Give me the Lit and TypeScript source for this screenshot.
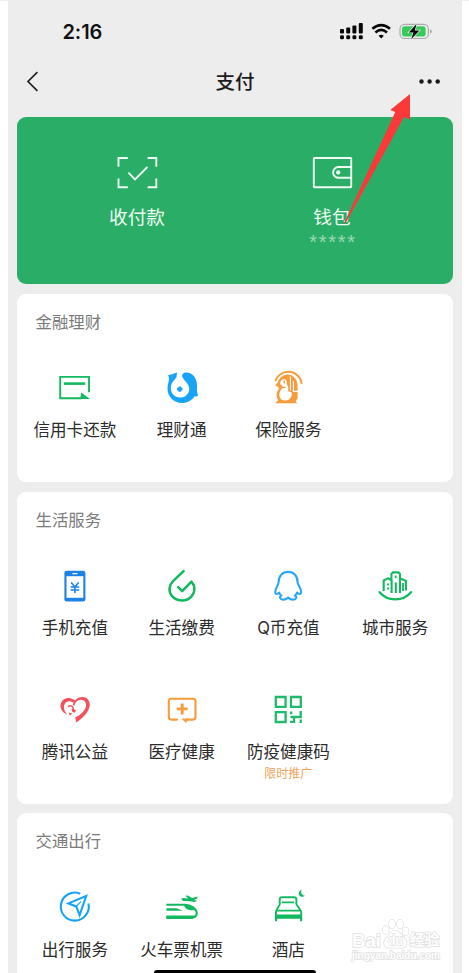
import { LitElement, html, svg, css } from "lit";
import { customElement, property } from "lit/decorators.js";

const G = "#12b95f";
const B = "#17a4f7";
const O = "#f79b3c";

const icons: Record<string, unknown> = {
  card: svg`<path d="M34 24.2V8.9H5.2V30.2H26" fill="none" stroke=${G} stroke-width="1.9"/>
    <path d="M8.8 15.6H30.2" stroke=${G} stroke-width="2.6"/>
    <path d="M26.2 24.6L35 31.1H25.2Z" fill=${G}/>`,
  fund: svg`<path d="M6.2 6.9L9.4 6.4 14.9 4.6 14.6 8.8C13 12 9.2 14.2 8.8 19.6 8.8 25.8 12.8 29.6 18 29.6 23.4 29.6 27.2 25.6 27.2 20.4 27 15.4 22 12.8 20.4 9 19.4 6 21.6 4.4 25 4.5 31 5 35 10.6 35 17.4 35 21 34.4 23 36.2 27L34.6 28.6 32.4 28.4C29.6 32.4 25.4 34.9 20 34.9 11.4 34.8 5.5 28.4 5.5 20.4 5.5 15 8.2 12 6.2 6.9Z" fill=${B}/>
    <path d="M17.8 18.4V23.8M15.1 21.1H20.5" stroke=${B} stroke-width="2.8"/>`,
  insurance: svg`<path d="M7.4 13C9.4 7.6 14.4 3.8 20.3 3.8 27.2 3.8 32.9 8.8 33.6 15.8" fill="none" stroke=${O} stroke-width="2"/>
    <path d="M9.6 14.4C11.4 9.2 16 6.6 20.6 6.6 25.8 7.2 29 11.6 29.6 17V30.4L27.6 33.2 29.2 35.2H7.4L10.2 32C7.8 28.4 8 24.4 11 20.8L10 18.8 7.2 17.6Z" fill=${O}/>
    <path d="M12.6 13.2C15 9.8 18.6 10.2 18.8 14.6 18.6 17.4 21.4 18.6 20 23.2L24 24.4C23.8 29.4 21.2 32.6 17 32.6 11.2 32.2 9.6 26 13.2 21.4 15 19.4 15.2 17.6 12 16.2Z" fill="#fff"/>
    <path d="M22.4 8.4V22.4M25.4 13V23.4H29.8" fill="none" stroke="#fff" stroke-width="1.1"/>
    <path d="M16.2 12.6V15.4M13.4 19.6L17.4 19.2" stroke=${O} stroke-width="1.4"/>`,
  phone: svg`<rect x="9.4" y="4.8" width="21" height="30.8" rx="2.4" fill="#1b82e6"/>
    <path d="M11.5 10.2H28.3V31.8H11.5Z" fill="#fff"/><path d="M17.8 7.6H22" stroke="#fff" stroke-width="1.1" stroke-linecap="round"/>
    <path d="M16.2 16.4L19.9 21 23.6 16.4M15.6 21H24.2M15.6 24H24.2M19.9 21V27" fill="none" stroke="#1b82e6" stroke-width="1.6"/>`,
  bill: svg`<path d="M21.6 5.2L11.5 14.6C7 19 6.2 25 9.6 29.6 14.4 36 24.6 36 29.6 30.4 33.4 26 33.4 20 29.4 15.6L20.2 25.2 16.2 21.2" fill="none" stroke=${G} stroke-width="2.5" stroke-linecap="round" stroke-linejoin="round"/>`,
  qq: svg`<path d="M20.1 5.9C14.4 5.9 10.6 10 10.6 16.2 10.6 19 7.2 22.2 7.2 26.2 7.2 28.6 8.5 28.4 11.2 26.6 11.5 28.2 12.2 28.6 13.4 29.6 11.8 30.4 11.4 31.6 12.8 32.8 14.8 34 18 33.4 20.1 31.6 22.2 33.4 25.4 34 27.6 32.8 29 31.6 28.4 30.4 26.8 29.6 28 28.6 28.8 28.2 29 26.6 31.8 28.4 33.2 28.6 33.2 26.2 33.2 22.2 29.6 19 29.6 16.2 29.6 10 25.8 5.9 20.1 5.9Z" fill="none" stroke="#2ca6f2" stroke-width="2.1" stroke-linejoin="round"/>`,
  city: svg`<path d="M4.6 26.2C12.4 35.6 28 35.8 36 26.2" fill="none" stroke=${G} stroke-width="2.3" stroke-linecap="round"/>
    <path d="M8.7 25V14.4L13 12.4 16.6 14.2V27M16.4 13.2V8L18 6.4H23.4L25 8V27M25 12.2L31 15V24.6M20.8 27V16.4" fill="none" stroke=${G} stroke-width="2.1"/>
    <path d="M20.7 9.6V12M13 17.4V19.6M13 21.4V23.6M28 17V25" stroke=${G} stroke-width="1.8"/>`,
  heart: svg`<path d="M20.2 10.6C15.4 6.6 9 7.4 6.2 12.4 4.2 17.4 6.8 22.2 12 24.4 8.8 20.6 8 16.6 10 13.6 12.2 10.6 15.8 10.6 18.4 12.8Z" fill="#f2505a"/>
    <path d="M13 16.6C15.8 14.8 18.4 16.2 18.6 20" fill="none" stroke="#f2505a" stroke-width="1.5"/>
    <path d="M16.6 18.4L21.4 20.6 19.4 22.8 17 21.6ZM13.6 22.6L17.4 23.6 15 25.6Z" fill="#f2505a"/>
    <path d="M17.8 15.2C18.6 10.2 23.4 6.6 28.4 7 33.6 7.8 36 13 34.2 18 32 24 27 28.8 21.2 32.4L20.2 27.6C25.6 24.8 29.8 20.8 31 16.4 31.6 12.6 29.2 9.6 25.8 9.8 22.4 10 20 12.2 19.4 15.6Z" fill="#f2505a"/>`,
  medical: svg`<path d="M15 29.6H9.3Q6.8 29.6 6.8 27.1V11.2Q6.8 8.7 9.3 8.7H31Q33.5 8.7 33.5 11.2V27.1Q33.5 29.6 31 29.6H25" fill="none" stroke=${O} stroke-width="2.1" stroke-linecap="round"/>
    <path d="M20.2 13.4V24.4M14.7 18.9H25.7" stroke=${O} stroke-width="2.9"/>
    <path d="M19.4 28.6H26.2L24.1 33Z" fill=${O}/>`,
  qr: svg`<path d="M7.8 7H17.6V16.8H7.8ZM23 7H32.8V16.8H23ZM7.8 22.2H17.6V32H7.8Z" fill="none" stroke="#22b96c" stroke-width="2.3"/>
    <path d="M23.2 21.4V24.2M32.7 21V27H22.4M22 31.9H26V27M32.7 29.6V33" fill="none" stroke="#22b96c" stroke-width="2.3"/>`,
  travel: svg`<path d="M25.2 6.7A14 14 0 1 0 33.4 16.4" fill="none" stroke=${B} stroke-width="2.1"/>
    <path d="M31.2 9L13.4 16.4 21.2 19.4 24.6 28.2Z" fill="none" stroke=${B} stroke-width="2.1"/>
    <path d="M21.2 19.4L26 14.6" stroke=${B} stroke-width="1.3"/>`,
  train: svg`<path d="M4.4 17.8H22.8C29 18 34.5 22 34.7 26 34.7 28.6 33 30.4 30.4 30.4H4.4" fill="none" stroke=${G} stroke-width="2.1"/>
    <path d="M4.4 28.4H33.4C32.6 31 31 31.9 29.6 31.9H4.4Z" fill=${G}/>
    <path d="M4.4 21.2H14.4L20.8 23.8H4.4Z" fill=${G}/>
    <path d="M22.4 19.4C24 22.8 28.8 23.6 33.6 23.2 31.8 20.4 28 18.2 22.4 17.6Z" fill=${G}/>
    <path d="M19 11.8L21.2 11 26.2 11.6 23.4 8.8 25.8 8.4 30.2 11 35.6 9.6 35 11.8 31.8 13 35.2 13.8 32.6 15 27.8 14.2 21 14Z" fill=${G}/>`,
  hotel: svg`<path d="M11.7 16.8V12.4Q11.7 10.2 14 10.2H26Q28.4 10.2 28.4 12.4V16.8M12 16.2C12 19.2 7.9 21.8 7.9 25.6V33.6M28.2 16.2C28.2 19.2 33.2 21.8 33.2 25.6V33.6" fill="none" stroke=${G} stroke-width="1.9"/>
    <path d="M13.6 15.4H26.2M8.4 23.6H33" stroke=${G} stroke-width="1.8"/>
    <path d="M7.1 27.4H34.1V34.2H32V31.8H9.2V34.2H7.1Z" fill=${G}/>
    <path d="M33.6 2.8C32.4 6 34 8.6 37 8.8 35.2 10.6 31.6 10 30.9 7.4 30.4 5.4 31.6 3.4 33.6 2.8Z" fill=${G}/>`,
};

interface Service {
  icon: string;
  label: string;
  note?: string;
}

@customElement("service-card")
class ServiceCard extends LitElement {
  @property() heading = "";
  @property({ attribute: false }) items: Service[] = [];

  static styles = css`
    :host { display: block; background: #fff; border-radius: 9px; padding: 0 4.5px; flex: none; }
    .heading { margin: 0; padding: 0 14px; font-size: 16.4px; font-weight: 400; line-height: 56px; color: #7b7b7b; }
    .grid { display: grid; grid-template-columns: repeat(4, 1fr); grid-auto-rows: 124px; padding-top: 18px; margin-bottom: -10px; }
    .item { display: flex; flex-direction: column; align-items: center; }
    .icon { width: 40px; height: 40px; display: block; }
    .label { margin-top: 10.5px; font-size: 16.6px; line-height: 24px; color: #2b2b2b; white-space: nowrap; }
    .note { font-size: 12px; line-height: 19px; color: #f0a45c; }
  `;

  render() {
    return html`<h2 class="heading">${this.heading}</h2>
      <div class="grid">
        ${this.items.map(
          (i) => html`<div class="item">
            <svg class="icon" viewBox="0 0 40 40">${icons[i.icon]}</svg>
            <span class="label">${i.label}</span>
            ${i.note ? html`<span class="note">${i.note}</span>` : ""}
          </div>`,
        )}
      </div>`;
  }
}

@customElement("app-root")
class AppRoot extends LitElement {
  static styles = css`
    :host { display: block; position: relative; box-sizing: border-box; width: 469px; height: 973px; overflow: hidden;
      background: #fff; border-top: 1px solid #efefef; padding: 0 7px 0 8px;
      font-family: Inter, "Noto Sans CJK SC", sans-serif; }
    .phone { height: 972px; background: #ededed; padding: 0 9px; overflow: hidden; box-sizing: border-box; display: flex; flex-direction: column; }
    .status { height: 60px; flex: none; display: flex; align-items: center; justify-content: space-between; padding: 0 21px 0 45.5px; }
    .time { font: 600 20px/24px Inter, sans-serif; color: #111; letter-spacing: -0.1px; padding-top: 1px; }
    .signals { display: block; width: 94px; height: 20px; }
    .nav { height: 55.5px; flex: none; display: grid; grid-template-columns: 40px 1fr 40px; align-items: start; box-sizing: border-box; }
    .navicon { display: block; width: 40px; height: 40px; }
    .title { margin: 0; text-align: center; font-size: 19.5px; font-weight: 500; line-height: 43px; color: #1c1c1c; }
    .stack { display: flex; flex-direction: column; gap: 9.8px; }
    .pay { height: 167.5px; flex: none; background: #2aae67; border-radius: 9px; display: grid; grid-template-columns: 195px 195px; justify-content: center; padding-right: 1px; }
    .entry { display: flex; flex-direction: column; align-items: center; padding-top: 34px; color: #effcf4; font-size: 18.7px; line-height: 28px; }
    .payicon { width: 44px; height: 44px; display: block; margin-bottom: 9px; }
    .mask { font: 20px/20px "Liberation Sans", sans-serif; letter-spacing: 1.7px; margin: 0.5px -2px 0 0; color: #9bd8b4; }
    .pointer { position: absolute; left: 340px; top: 92px; width: 80px; height: 135px; }
    .home { position: absolute; left: 154px; bottom: 0; width: 162px; height: 3.5px; background: #000; border-radius: 3px 3px 0 0; }
    .mark { position: absolute; left: 340px; top: 909px; width: 110px; height: 62px; overflow: visible; }
    .brand { font: 700 19px "Liberation Sans", sans-serif; }
    .du { font-size: 14px; }
    .cjk { font-family: "Noto Sans CJK SC", sans-serif; font-size: 15px; }
    .site { font: 700 10px "Liberation Sans", sans-serif; }
  `;

  render() {
    return html`
      <div class="phone">
        <div class="status">
          <span class="time">2:16</span>
          <svg class="signals" viewBox="338 21 94 20">
            <g fill="#080808">
              <rect x="340" y="29" width="4" height="4.6" rx="1"/><rect x="346.2" y="27.4" width="4" height="6.2" rx="1"/>
              <rect x="352.4" y="25.6" width="4" height="8" rx="1"/><rect x="358.8" y="23" width="4" height="10.6" rx="1"/>
              <rect x="340" y="35.3" width="4" height="4" rx="1.4"/><rect x="346.2" y="35.3" width="4" height="4" rx="1.4"/>
              <rect x="352.4" y="35.3" width="4" height="4" rx="1.4"/><rect x="358.8" y="35.3" width="4" height="4" rx="1.4"/>
              <path d="M378.6 35.8Q381.2 33.8 383.8 35.8L381.2 38.6Z"/>
            </g>
            <path d="M372.4 28.8Q381.2 21.4 390 28.8M375.4 32.4Q381.2 27.4 387 32.4" fill="none" stroke="#080808" stroke-width="2.6"/>
            <rect x="400" y="24.3" width="28.4" height="14.2" rx="4.6" fill="none" stroke="#a8aaa8" stroke-width="1.2"/>
            <rect x="402" y="26.2" width="23.6" height="10.4" rx="2.8" fill="#34cb5b"/>
            <path d="M430 29.2Q431.8 29.6 431.8 31.4T430 33.6Z" fill="#a8aaa8"/>
            <path d="M416.6 23.8L408.8 32.4H413.4L411.2 39.2 419.4 30.4H414.8Z" fill="#0b0b0b" stroke="#ededed" stroke-width="1.4" paint-order="stroke"/>
          </svg>
        </div>
        <div class="nav">
          <svg class="navicon" viewBox="17 61 40 40"><path d="M37.4 72.2L28 81.5 37.4 90.8" fill="none" stroke="#222" stroke-width="1.7"/></svg>
          <h1 class="title">支付</h1>
          <svg class="navicon" viewBox="413 61 40 40"><g fill="#1a1a1a"><circle cx="421.5" cy="81.5" r="2.2"/><circle cx="429.6" cy="81.5" r="2.2"/><circle cx="437.7" cy="81.5" r="2.2"/></g></svg>
        </div>
        <div class="stack">
          <div class="pay">
            <div class="entry">
              <svg class="payicon" viewBox="115 151 44 44"><path d="M118.5 166.8V158H127.8M147.6 158H156.3V166.8M156.3 178.4V187.2H147.6M127.8 187.2H118.5V178.4M128.4 172.6L135 179.3 147.4 167" fill="none" stroke="#effcf4" stroke-width="1.9"/></svg>
              <span>收付款</span>
            </div>
            <div class="entry">
              <svg class="payicon" viewBox="310 151 44 44"><g fill="none" stroke="#effcf4" stroke-width="1.9"><rect x="313.8" y="158" width="37.4" height="29.2" rx=".6"/><path d="M351 167H338.5A5.4 5.4 0 0 0 338.5 177.8H351"/></g><circle cx="338.2" cy="172.4" r="2.1" fill="#effcf4"/></svg>
              <span>钱包</span>
              <span class="mask">*****</span>
            </div>
          </div>
          <service-card heading="金融理财" .items=${[
            { icon: "card", label: "信用卡还款" },
            { icon: "fund", label: "理财通" },
            { icon: "insurance", label: "保险服务" },
          ]}></service-card>
          <service-card heading="生活服务" .items=${[
            { icon: "phone", label: "手机充值" },
            { icon: "bill", label: "生活缴费" },
            { icon: "qq", label: "Q币充值" },
            { icon: "city", label: "城市服务" },
            { icon: "heart", label: "腾讯公益" },
            { icon: "medical", label: "医疗健康" },
            { icon: "qr", label: "防疫健康码", note: "限时推广" },
          ]}></service-card>
          <service-card heading="交通出行" .items=${[
            { icon: "travel", label: "出行服务" },
            { icon: "train", label: "火车票机票" },
            { icon: "hotel", label: "酒店" },
          ]}></service-card>
        </div>
      </div>
      <svg class="pointer" viewBox="340 93 80 135"><path d="M410 94L390.3 110 395.3 112 344 223.3H345.5L404 117 410 119.8Z" fill="#fc3838"/></svg>
      <svg class="mark" viewBox="340 910 110 62">
        <g fill="#fff" stroke="#e0e0e0" stroke-width="1.5" paint-order="stroke">
          <ellipse cx="385.8" cy="930" rx="3" ry="4"/><ellipse cx="392" cy="924" rx="3" ry="4.2"/>
          <ellipse cx="400" cy="924" rx="3" ry="4.2"/><ellipse cx="405.6" cy="931.4" rx="3" ry="4"/>
          <path d="M395.4 930.5C399 930.5 400.6 934.4 404 937.4 408.4 941.4 406.6 947.8 401.6 947.8H389C384 947.8 382.4 941.8 386.4 938 390 934.8 391.6 930.5 395.4 930.5Z"/>
          <text class="brand" x="352" y="946.6" textLength="29" lengthAdjust="spacingAndGlyphs">Bai</text>
          <text class="brand du" x="388" y="945" textLength="15" lengthAdjust="spacingAndGlyphs">du</text>
          <text class="brand cjk" x="409.5" y="945.4" textLength="30" lengthAdjust="spacingAndGlyphs">经验</text>
          <text class="site" x="352" y="959.4" textLength="88" lengthAdjust="spacingAndGlyphs">jingyan.baidu.com</text>
        </g>
      </svg>
      <div class="home"></div>
    `;
  }
}
